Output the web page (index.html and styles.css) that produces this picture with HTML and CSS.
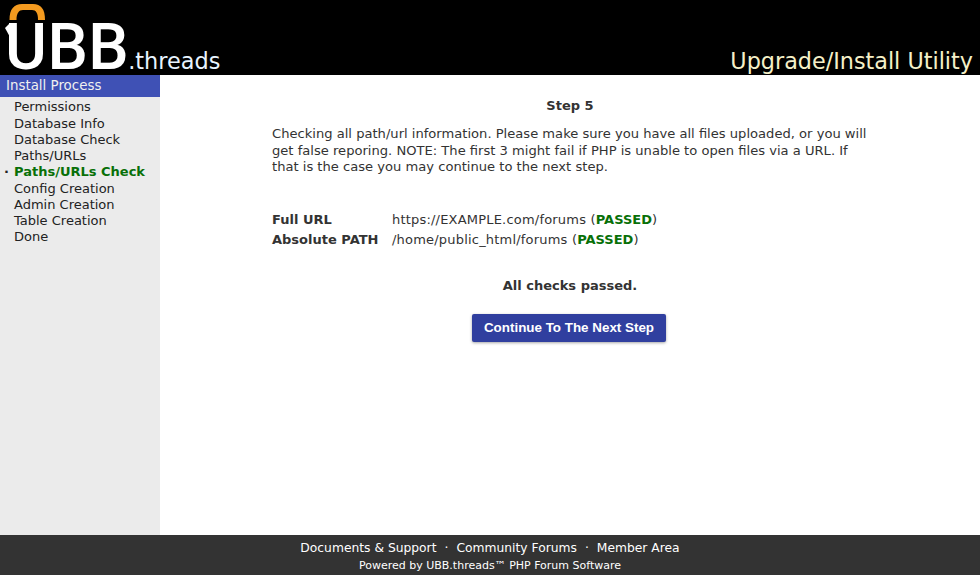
FILE: index.html
```html
<!DOCTYPE html>
<html lang="en">
<head>
    <meta charset="UTF-8">
    <meta name="viewport" content="width=device-width, initial-scale=1.0">
    <title>UBB.threads Upgrade/Install Utility</title>
    <link rel="stylesheet" href="styles.css">
</head>
<body>

    <!-- Header -->
    <div class="header">
        <div class="logo">
            <svg class="logo-arc" width="50" height="40" viewBox="0 0 50 40">
                <path d="M9.5 20 C9.5 9 14 4 22 4 H33 C41 4 45 9 45 20 H38 C38 13 36 10 32 10 H23 C19 10 16.5 13 16.5 20 Z" fill="#f39a1f"/>
                <path d="M10 23 L5 28 L10 37 Z" fill="white"/>
            </svg>
            <span class="logo-ubb">UBB</span><span class="logo-threads">.threads</span>
        </div>
        <div class="utility">Upgrade/Install Utility</div>
    </div>

    <div class="middle">
        <!-- Sidebar -->
        <div class="sidebar">
            <div class="sidebar-title">Install Process</div>
            <ul class="steps">
                <li>Permissions</li>
                <li>Database Info</li>
                <li>Database Check</li>
                <li>Paths/URLs</li>
                <li class="current">Paths/URLs Check</li>
                <li>Config Creation</li>
                <li>Admin Creation</li>
                <li>Table Creation</li>
                <li>Done</li>
            </ul>
        </div>

        <!-- Step content -->
        <div class="content">
            <div class="panel">
                <h3>Step 5</h3>
                <p class="intro">Checking all path/url information. Please make sure you have all files uploaded, or you will get false reporing. NOTE: The first 3 might fail if PHP is unable to open files via a URL. If that is the case you may continue to the next step.</p>
                <div class="checks">
                    <div class="check-label">Full URL</div>
                    <div class="check-value">https://EXAMPLE.com/forums (<b class="passed">PASSED</b>)</div>
                    <div class="check-label">Absolute PATH</div>
                    <div class="check-value">/home/public_html/forums (<b class="passed">PASSED</b>)</div>
                </div>
                <p class="result">All checks passed.</p>
                <div class="actions">
                    <button class="next-btn">Continue To The Next Step</button>
                </div>
            </div>
        </div>
    </div>

    <!-- Footer -->
    <div class="footer">
        <div class="footer-links">Documents &amp; Support<span class="sep">·</span>Community Forums<span class="sep">·</span>Member Area</div>
        <div class="powered">Powered by UBB.threads™ PHP Forum Software</div>
    </div>

</body>
</html>
```

FILE: styles.css
```css
* {
    margin: 0;
    padding: 0;
    box-sizing: border-box;
}
body {
    display: flex;
    flex-direction: column;
    height: 100vh;
    overflow: hidden;
    background: white;
    color: #333;
    font-family: "DejaVu Sans", Verdana, sans-serif;
    font-size: 13px;
}
.header {
    height: 75px;
    flex: none;
    display: flex;
    justify-content: space-between;
    align-items: flex-end;
    background: black;
}
.logo {
    position: relative;
    padding: 21px 0 0 5px;
    display: flex;
    align-items: baseline;
    height: 75px;
}
.logo-arc {
    position: absolute;
    left: 0;
    top: 0;
}
.logo-ubb {
    color: white;
    font-family: Roboto, Arial, sans-serif;
    font-size: 64px;
    font-weight: 500;
    line-height: 54px;
    letter-spacing: 0.5px;
}
.logo-threads {
    color: #e8f4ff;
    font-size: 22.4px;
    line-height: 26px;
    margin-left: -1px;
}
.utility {
    color: #f5f0c8;
    font-size: 22.3px;
    line-height: 27px;
    padding-right: 7px;
}
.middle {
    flex: 1;
    display: flex;
    min-height: 0;
}
.sidebar {
    width: 160px;
    flex: none;
    background: #ebebeb;
}
.sidebar-title {
    height: 22px;
    padding-left: 6px;
    background: #3f51b5;
    color: #f0f0f0;
    font-size: 13.4px;
    line-height: 22px;
}
.steps {
    list-style: none;
    padding: 2.3px 0 0 14px;
}
.steps li {
    height: 16.25px;
    line-height: 16px;
    color: #222;
}
.steps .current {
    position: relative;
    color: #087008;
    font-weight: bold;
}
.steps .current::before {
    content: "·";
    position: absolute;
    left: -10px;
    color: #222;
}
.content {
    flex: 1;
    display: flex;
    justify-content: center;
}
.panel {
    width: 596px;
    padding-top: 23px;
}
.panel h3 {
    font-size: 13px;
    line-height: 16px;
    text-align: center;
    margin-bottom: 12px;
}
.intro {
    font-size: 13.1px;
    line-height: 16.5px;
    margin-bottom: 36px;
}
.checks {
    display: grid;
    grid-template-columns: 120px 1fr;
    row-gap: 4px;
    line-height: 16px;
}
.check-label {
    font-weight: bold;
}
.check-value {
    letter-spacing: 0.2px;
}
.passed {
    color: #087008;
    letter-spacing: 0;
}
.result {
    font-weight: bold;
    text-align: center;
    line-height: 16px;
    margin-top: 30px;
}
.actions {
    display: flex;
    justify-content: center;
    padding-right: 2px;
    margin-top: 20px;
}
.next-btn {
    width: 194px;
    height: 28px;
    border: none;
    border-radius: 2px;
    background: #303f9f;
    color: white;
    font-family: "Liberation Sans", Arial, sans-serif;
    font-size: 13.4px;
    font-weight: bold;
    box-shadow: 0 1px 3px rgba(0, 0, 0, 0.35);
    cursor: pointer;
}
.footer {
    height: 40px;
    flex: none;
    background: #333;
    color: white;
    text-align: center;
}
.footer-links {
    padding-top: 5px;
    line-height: 16px;
    font-size: 12.3px;
}
.sep {
    margin: 0 8px;
}
.powered {
    font-size: 11px;
    line-height: 14px;
    margin-top: 3px;
}
```
